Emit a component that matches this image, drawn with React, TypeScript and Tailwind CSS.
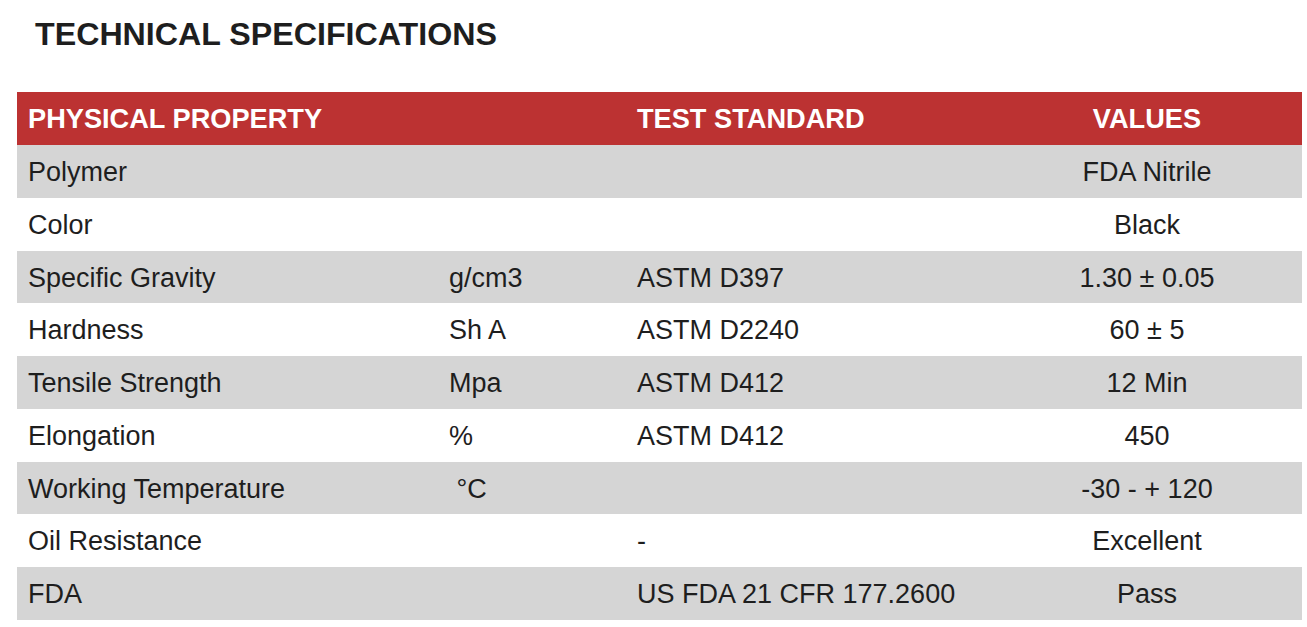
const rows: [string, string, string, string][] = [
  ['Polymer', '', '', 'FDA Nitrile'],
  ['Color', '', '', 'Black'],
  ['Specific Gravity', 'g/cm3', 'ASTM D397', '1.30 ± 0.05'],
  ['Hardness', 'Sh A', 'ASTM D2240', '60 ± 5'],
  ['Tensile Strength', 'Mpa', 'ASTM D412', '12 Min'],
  ['Elongation', '%', 'ASTM D412', '450'],
  ['Working Temperature', '\u00a0°C', '', '-30 - + 120'],
  ['Oil Resistance', '', '-', 'Excellent'],
  ['FDA', '', 'US FDA 21 CFR 177.2600', 'Pass'],
]

export default function App() {
  return (
    <div className="min-h-screen bg-white text-[#1e1e1e]" style={{ fontFamily: '"Liberation Sans", Arial, sans-serif' }}>
      <h1 className="pl-[35px] pt-[18px] text-[32.2px] font-bold leading-[32px]">
        TECHNICAL SPECIFICATIONS
      </h1>
      <div className="ml-[17px] mt-[42px] w-[1285px]">
        <div className="grid h-[53px] grid-cols-[421px_188px_366px_310px] items-center bg-[#bc3232] pt-[2px] text-[27.2px] font-bold text-white">
          <div className="pl-[11px]">PHYSICAL PROPERTY</div>
          <div />
          <div className="pl-[11px]">TEST STANDARD</div>
          <div className="text-center">VALUES</div>
        </div>
        {rows.map((r, i) => (
          <div
            key={r[0]}
            className={`grid h-[52.75px] grid-cols-[421px_188px_366px_310px] items-center pt-[2px] text-[27px] ${i % 2 === 0 ? 'bg-[#d5d5d5]' : 'bg-white'}`}
          >
            <div className="pl-[11px]">{r[0]}</div>
            <div className="pl-[11px]">{r[1]}</div>
            <div className="pl-[11px]">{r[2]}</div>
            <div className="text-center">{r[3]}</div>
          </div>
        ))}
      </div>
    </div>
  )
}
